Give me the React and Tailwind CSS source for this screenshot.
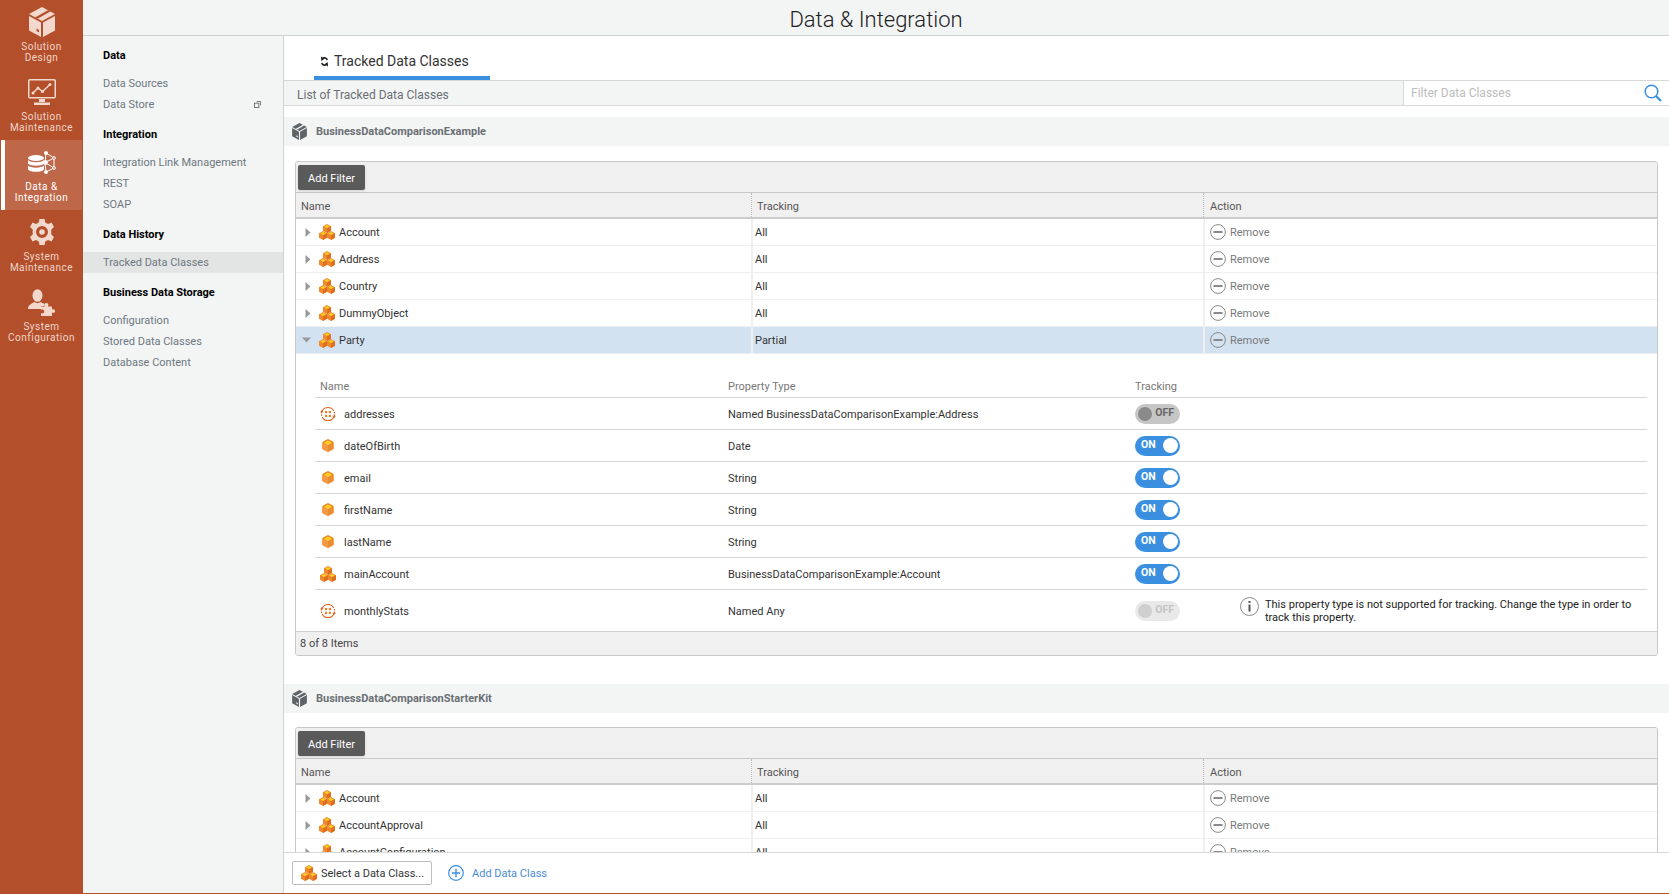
import React from "react";

const PackageIcon = ({ className, fill, gap }) => (
  <svg viewBox="0 0 26 30" className={className}>
    <path d="M13 0 L26 7 L13 14 L0 7 Z" fill={fill} />
    <path d="M6 10.5 L19 3.3 L21.4 4.6 L8.4 11.8 Z" fill={gap} />
    <path d="M0 9 L12 15.6 V30 L0 23.4 Z" fill={fill} />
    <path d="M26 9 L14 15.6 V30 L26 23.4 Z" fill={fill} />
    <path d="M7.5 21.5 l2.5 1.4 v2.6 l-2.5 -1.4 Z" fill={gap} />
  </svg>
);

const MonitorIcon = ({ className }) => (
  <svg viewBox="0 0 28 26" className={className} fill="none" stroke="#f3d9cd">
    <rect x="0.75" y="0.75" width="26.5" height="18" rx="1" strokeWidth="1.5" />
    <path d="M5 14 L10 9 L14.5 12.5 L22 5.5" strokeWidth="1.4" />
    <g fill="#f3d9cd" stroke="none">
      <circle cx="5" cy="14" r="1.5" /><circle cx="10" cy="9" r="1.5" /><circle cx="14.5" cy="12.5" r="1.5" /><circle cx="22" cy="5.5" r="1.5" />
      <rect x="11" y="20" width="6" height="3" />
      <rect x="6" y="23.5" width="16" height="2.5" />
    </g>
  </svg>
);

const DataIcon = ({ className }) => (
  <svg viewBox="0 0 28 23" className={className}>
    <g fill="#ffffff">
      <ellipse cx="8" cy="7" rx="8" ry="3" />
      <path d="M0 9 C2 12 14 12 16 9 V12.6 C14 15.6 2 15.6 0 12.6 Z" />
      <path d="M0 14.6 C2 17.4 14 17.4 16 14.6 V18.4 C14 21.6 2 21.6 0 18.4 Z" />
    </g>
    <g stroke="#ffffff" strokeWidth="1" fill="none">
      <path d="M18 2 L26 7 L26 17 L18 21 M18 2 L17 11.5 L18 21 M17 11.5 L26 7 M17 11.5 L26 17 M16 11.5 H17" />
    </g>
    <g fill="#ffffff">
      <circle cx="18" cy="2" r="2" /><circle cx="17.5" cy="11.5" r="2.4" /><circle cx="18" cy="21" r="2" />
    </g>
    <g fill="#bf6849" stroke="#ffffff" strokeWidth="1">
      <circle cx="26" cy="7" r="1.4" /><circle cx="26" cy="17" r="1.4" />
    </g>
  </svg>
);

const GearIcon = ({ className }) => (
  <svg viewBox="0 0 26 26" className={className}>
    <path fillRule="evenodd" fill="#f3d9cd" d="M10.5 0 H15.5 L16.3 3.6 L19 4.9 L22.5 3.6 L25 8 L22.3 10.5 V15.5 L25 18 L22.5 22.4 L19 21.1 L16.3 22.4 L15.5 26 H10.5 L9.7 22.4 L7 21.1 L3.5 22.4 L1 18 L3.7 15.5 V10.5 L1 8 L3.5 3.6 L7 4.9 L9.7 3.6 Z M13 7 A6 6 0 1 0 13 19 A6 6 0 1 0 13 7 Z M13 10.2 A2.8 2.8 0 1 1 13 15.8 A2.8 2.8 0 1 1 13 10.2 Z" />
  </svg>
);

const PersonIcon = ({ className }) => (
  <svg viewBox="0 0 27 27" className={className}>
    <g fill="#f3d9cd">
      <ellipse cx="9.5" cy="6.5" rx="5" ry="6.3" />
      <path d="M0 20 C0 15.5 4 14.5 6.5 13 C8 14.5 11 14.5 12.5 13 C14.5 14 15.5 14.5 16.5 15 V17 H13 V20 Z" />
      <path d="M13 17.5 H17 C16 15 17 14 18.5 14 C20 14 21 15 20 17.5 H24 V20.5 C26 19.6 27 20.5 27 22 C27 23.5 26 24.4 24 23.5 V27 H13 V24 C15 25 16.2 24 16.2 22.5 C16.2 21 15 20 13 21 Z" />
    </g>
  </svg>
);

const Cube = ({ x, y }) => (
  <g transform={`translate(${x} ${y})`}>
    <path d="M4 0 L8 2.2 V6.8 L4 9 L0 6.8 V2.2 Z" fill="#f0892b" />
    <path d="M4 4.6 L8 2.2 V6.8 L4 9 Z" fill="#dd6f1f" />
    <path d="M4 1 L6.6 2.4 L4 3.9 L1.4 2.4 Z" fill="#ffd21f" />
  </g>
);

const CubesIcon = ({ className }) => (
  <svg viewBox="0 0 16 16" className={className}>
    <Cube x={4} y={0} />
    <Cube x={0} y={7} />
    <Cube x={8} y={7} />
  </svg>
);

const SingleCube = ({ className }) => (
  <svg viewBox="0 0 12 13" className={className}>
    <path d="M6 0.3 L11.4 3 V10 L6 12.7 L0.6 10 V3 Z" fill="#ee8a2d" stroke="#ee8a2d" strokeWidth="0.6" strokeLinejoin="round" />
    <path d="M6 6 V12.7 L0.6 10 V3 Z" fill="#f29a45" />
    <path d="M6 1.5 L10 3.7 L6 5.9 L2 3.7 Z" fill="#ffd21f" />
  </svg>
);

const RingIcon = ({ className }) => (
  <svg viewBox="0 0 16 16" className={className} fill="none">
    <path d="M2.2 5 A6.5 6.5 0 0 1 13.8 5 M13.8 11 A6.5 6.5 0 0 1 2.2 11" stroke="#d9651c" strokeWidth="1.1" />
    <path d="M1.6 6 V10 M14.4 6 V10" stroke="#d9651c" strokeWidth="1.1" strokeDasharray="1.6 1" />
    <path d="M0 6.2 L2 4 L3.6 6.2 Z M12.4 9.8 L14 12 L16 9.8 Z" fill="#d9651c" />
    <g fill="#e8812a">
      <rect x="5" y="5" width="2.2" height="2.2" /><rect x="8.8" y="5" width="2.2" height="2.2" />
      <rect x="5" y="8.8" width="2.2" height="2.2" /><rect x="8.8" y="8.8" width="2.2" height="2.2" />
    </g>
  </svg>
);

const RemoveIcon = () => (
  <svg viewBox="0 0 16 16" className="w-4 h-4 shrink-0" fill="none">
    <circle cx="8" cy="8" r="7.4" stroke="#8a8a8a" strokeWidth="1" />
    <rect x="3.5" y="7" width="9" height="2" fill="#8a8a8a" />
  </svg>
);

const Arrow = ({ open }) =>
  open ? (
    <svg viewBox="0 0 9 6" className="w-[9px] h-[6px] ml-[6px] mr-[8px] shrink-0">
      <path d="M0 0.5 H9 L4.5 5.5 Z" fill="#999999" />
    </svg>
  ) : (
    <svg viewBox="0 0 6 9" className="w-[6px] h-[9px] ml-[9px] mr-[8px] shrink-0">
      <path d="M0.5 0 L5.5 4.5 L0.5 9 Z" fill="#999999" />
    </svg>
  );

const NavItem = ({ icon, lines, active }) => (
  <div className={`relative h-[70px] flex flex-col items-center ${active ? "bg-[#bf6849] mr-px ml-px text-white" : "text-[#f1d6ca]"}`}>
    {active && <div className="absolute left-0 top-0 bottom-0 w-[4px] bg-white" />}
    <div className="h-[41px] shrink-0 flex items-center justify-center pt-[3px]">{icon}</div>
    <div className="text-center text-[10px] leading-[11px] tracking-[0.5px]">
      {lines.map((l) => (
        <div key={l}>{l}</div>
      ))}
    </div>
  </div>
);

const SubHead = ({ children }) => (
  <div className="h-[29px] mt-[4px] pt-[3px] pl-[20px] flex items-center text-[11px] font-bold text-black">{children}</div>
);

const SubLink = ({ children, active, ext }) => (
  <div className={`h-[21px] pl-[20px] pr-[22px] flex items-center justify-between text-[11px] text-[#6e7780] ${active ? "bg-[#e3e5e5]" : ""}`}>
    <span className="pt-[2px]">{children}</span>
    {ext && (
      <svg viewBox="0 0 8 8" className="w-[7px] h-[7px]" fill="none" stroke="#666666">
        <rect x="0.5" y="2.5" width="5" height="5" />
        <path d="M3 0.5 H7.5 V5" />
      </svg>
    )}
  </div>
);

const SectionHead = ({ name }) => (
  <div className="h-[29px] bg-[#f3f5f5] flex items-center pl-[8px] gap-[9px]">
    <PackageIcon className="w-[15px] h-[17px]" fill="#5f6468" gap="#f3f5f5" />
    <span className="pt-[2px] text-[11px] font-bold text-[#6a6f73]">{name}</span>
  </div>
);

const Toolbar = () => (
  <div className="h-[31px] bg-[#f0f0f0] border-b border-[#c8c8c8] pt-[3px] pl-[2px]">
    <div className="w-[67px] h-[25px] pt-[3px] bg-[#5a5a5a] rounded-[2px] shadow-sm flex items-center justify-center text-[11px] text-white">Add Filter</div>
  </div>
);

const HeadRow = () => (
  <div className="h-[26px] bg-[#f0f0f0] border-b-2 border-[#cccccc] grid grid-cols-[455px_452px_1fr] items-stretch text-[11px] text-[#555555]">
    <div className="pl-[5px] flex items-center"><span className="pt-[4px]">Name</span></div>
    <div className="pl-[5px] flex items-center border-l border-dotted border-[#bbbbbb]"><span className="pt-[4px]">Tracking</span></div>
    <div className="pl-[6px] flex items-center border-l border-dotted border-[#bbbbbb]"><span className="pt-[4px]">Action</span></div>
  </div>
);

const Row = ({ name, track, open }) => (
  <div className={`h-[27px] border-b border-[#eeeeee] grid grid-cols-[455px_452px_1fr] items-stretch text-[11px] text-[#333333] ${open ? "bg-[#d3e2f1]" : ""}`}>
    <div className="flex items-center">
      <Arrow open={open} />
      <CubesIcon className="w-[16px] h-[16px] mr-[4px] shrink-0" />
      <span className="pt-[2px]">{name}</span>
    </div>
    <div className="pl-[2px] flex items-center border-l-2 border-[#f0f0f0]"><span className="pt-[2px]">{track}</span></div>
    <div className="pl-[5px] flex items-center gap-[4px] border-l-2 border-[#f0f0f0]">
      <RemoveIcon />
      <span className="pt-[2px] text-[#77797c]">Remove</span>
    </div>
  </div>
);

const Toggle = ({ state }) => {
  if (state === "on")
    return (
      <div className="w-[45px] h-[20px] rounded-full bg-[#3b8fdf] flex items-center justify-between pl-[6px] pr-[2px]">
        <span className="text-[10.5px] font-bold text-white leading-none">ON</span>
        <span className="w-[15px] h-[15px] rounded-full bg-white" />
      </div>
    );
  if (state === "off")
    return (
      <div className="w-[45px] h-[20px] rounded-full bg-[#c6c6c6] flex items-center pl-[3px] pr-[6px] justify-between">
        <span className="w-[14px] h-[14px] rounded-full bg-[#8a8a8a]" />
        <span className="text-[10.5px] font-bold text-[#666666] leading-none">OFF</span>
      </div>
    );
  return (
    <div className="w-[45px] h-[20px] rounded-full bg-[#e9e9e9] flex items-center pl-[3px] pr-[6px] justify-between">
      <span className="w-[14px] h-[14px] rounded-full bg-[#cfcfcf]" />
      <span className="text-[10.5px] font-bold text-[#c4c4c4] leading-none">OFF</span>
    </div>
  );
};

const subCols = "grid grid-cols-[413px_407px_105px_1fr]";

const PropRow = ({ icon, name, type, toggle }) => (
  <div className={`${subCols} h-[32px] items-center border-b border-[#d6d6d6] text-[11px] text-[#333333]`}>
    <div className="flex items-center">
      <span className="w-[29px] pl-[5px] flex items-center">{icon}</span>
      <span className="pt-[4px]">{name}</span>
    </div>
    <div className="pt-[4px]">{type}</div>
    <div><Toggle state={toggle} /></div>
    <div />
  </div>
);

const ring = <RingIcon className="w-[16px] h-[16px]" />;
const single = <SingleCube className="w-[12px] h-[13px] ml-[2px]" />;
const cubes = <CubesIcon className="w-[16px] h-[16px]" />;

const Card1 = () => (
  <div className="mt-[15px] mx-[11px] border border-[#c8c8c8] rounded-[3px] overflow-hidden">
    <Toolbar />
    <HeadRow />
    {["Account", "Address", "Country", "DummyObject"].map((n) => (
      <Row key={n} name={n} track="All" />
    ))}
    <Row name="Party" track="Partial" open />
    <div className="pl-[19px] pr-[10px]">
      <div className={`${subCols} h-[44px] items-end pb-[2px] border-b border-[#d6d6d6] text-[11px] text-[#777777]`}>
        <div className="pl-[5px]">Name</div>
        <div>Property Type</div>
        <div>Tracking</div>
        <div />
      </div>
      <PropRow icon={ring} name="addresses" type="Named BusinessDataComparisonExample:Address" toggle="off" />
      <PropRow icon={single} name="dateOfBirth" type="Date" toggle="on" />
      <PropRow icon={single} name="email" type="String" toggle="on" />
      <PropRow icon={single} name="firstName" type="String" toggle="on" />
      <PropRow icon={single} name="lastName" type="String" toggle="on" />
      <PropRow icon={cubes} name="mainAccount" type="BusinessDataComparisonExample:Account" toggle="on" />
      <div className={`${subCols} h-[41px] items-center text-[11px] text-[#333333]`}>
        <div className="flex items-center">
          <span className="w-[29px] pl-[5px] flex items-center">{ring}</span>
          <span className="pt-[4px]">monthlyStats</span>
        </div>
        <div className="pt-[4px]">Named Any</div>
        <div><Toggle state="disabled" /></div>
        <div className="flex items-start">
          <svg viewBox="0 0 19 19" className="w-[19px] h-[19px] shrink-0 mr-[6px]" fill="none">
            <circle cx="9.5" cy="9.5" r="9" stroke="#8a8a8a" />
            <rect x="8.5" y="4" width="2" height="2" fill="#555555" />
            <rect x="8.5" y="7.5" width="2" height="7" fill="#555555" />
          </svg>
          <span className="pt-[1px] text-[11px] leading-[13px] text-[#222222]">This property type is not supported for tracking. Change the type in order to track this property.</span>
        </div>
      </div>
    </div>
    <div className="h-[24px] bg-[#f0f0f0] border-t border-[#d0d0d0] pl-[4px] flex items-center text-[11px] text-[#444444]"><span className="pt-[2px]">8 of 8 Items</span></div>
  </div>
);

const Card2 = () => (
  <div className="mt-[14px] mx-[11px] border border-[#c8c8c8] rounded-[3px] overflow-hidden">
    <Toolbar />
    <HeadRow />
    <Row name="Account" track="All" />
    <Row name="AccountApproval" track="All" />
    <Row name="AccountConfiguration" track="All" />
  </div>
);

export default function App() {
  return (
    <div className="w-full h-screen flex overflow-hidden bg-white font-['Roboto',sans-serif]">
      <aside className="w-[83px] shrink-0 bg-[#b34f2a]">
        <NavItem icon={<PackageIcon className="w-[26px] h-[30px]" fill="#f3d9cd" gap="#b34f2a" />} lines={["Solution", "Design"]} />
        <NavItem icon={<MonitorIcon className="w-[28px] h-[26px]" />} lines={["Solution", "Maintenance"]} />
        <NavItem active icon={<DataIcon className="w-[28px] h-[23px]" />} lines={["Data &", "Integration"]} />
        <NavItem icon={<GearIcon className="w-[26px] h-[26px]" />} lines={["System", "Maintenance"]} />
        <NavItem icon={<PersonIcon className="w-[27px] h-[27px]" />} lines={["System", "Configuration"]} />
      </aside>
      <div className="flex-1 min-w-0 flex flex-col border-b border-[#b34f2a]">
        <header className="h-[36px] shrink-0 bg-[#f3f5f5] border-b border-[#cfd2d2] flex items-center justify-center pt-[5px] text-[22px] leading-none font-light text-[#222222]">
          Data &amp; Integration
        </header>
        <div className="flex-1 min-h-0 flex">
          <nav className="w-[201px] shrink-0 bg-[#f3f5f5] border-r border-[#cfd2d2]">
            <SubHead>Data</SubHead>
            <div className="mt-[4px]"><SubLink>Data Sources</SubLink><SubLink ext>Data Store</SubLink></div>
            <SubHead>Integration</SubHead>
            <div className="mt-[4px]"><SubLink>Integration Link Management</SubLink><SubLink>REST</SubLink><SubLink>SOAP</SubLink></div>
            <SubHead>Data History</SubHead>
            <div className="mt-[4px]"><SubLink active>Tracked Data Classes</SubLink></div>
            <SubHead>Business Data Storage</SubHead>
            <div className="mt-[4px]"><SubLink>Configuration</SubLink><SubLink>Stored Data Classes</SubLink><SubLink>Database Content</SubLink></div>
          </nav>
          <main className="flex-1 min-w-0 flex flex-col">
            <div className="h-[44px] shrink-0 pl-[30px]">
              <div className="w-[176px] h-[44px] border-b-4 border-[#3b8fdf] flex items-center pl-[6px] pt-[10px] gap-[4px] text-[14px] text-[#333333]">
                <svg viewBox="0 0 10 12" className="w-[9px] h-[11px]" fill="none" stroke="#222222" strokeWidth="1.8">
                  <path d="M8 4.5 A3 3 0 0 0 3 2.8" />
                  <path d="M2 7.5 A3 3 0 0 0 7 9.2" />
                  <path d="M1 0.5 L5 3 L1.5 5.5 Z M9 11.5 L5 9 L8.5 6.5 Z" fill="#222222" stroke="none" />
                </svg>
                <span className="ml-[1px]">Tracked Data Classes</span>
              </div>
            </div>
            <div className="h-[26px] shrink-0 bg-[#f3f5f5] border-y border-[#d6d8d8] flex items-stretch justify-between">
              <div className="pl-[13px] pt-[4px] flex items-center text-[12px] text-[#6a6f73]">List of Tracked Data Classes</div>
              <div className="w-[266px] bg-white border-l border-[#d6d8d8] flex items-center justify-between pl-[7px] pr-[7px]">
                <span className="text-[12px] text-[#bcbcbc]">Filter Data Classes</span>
                <svg viewBox="0 0 18 18" className="w-[18px] h-[18px]" fill="none" stroke="#3b8fdf">
                  <circle cx="7.5" cy="7.5" r="6.3" strokeWidth="1.5" />
                  <path d="M12 12 L17 17" strokeWidth="2.2" />
                </svg>
              </div>
            </div>
            <div className="flex-1 min-h-0 overflow-hidden pt-[11px]">
              <SectionHead name="BusinessDataComparisonExample" />
              <Card1 />
              <div className="h-[28px]" />
              <SectionHead name="BusinessDataComparisonStarterKit" />
              <Card2 />
            </div>
            <div className="h-[41px] shrink-0 border-t border-[#d6d8d8] bg-white flex items-center pl-[8px]">
              <div className="w-[140px] h-[24px] border border-[#bdbdbd] rounded-[2px] flex items-center pl-[8px] gap-[4px] text-[11px] text-[#333333]">
                <CubesIcon className="w-[16px] h-[16px] shrink-0" />
                <span className="pt-[2px]">Select a Data Class...</span>
              </div>
              <svg viewBox="0 0 16 16" className="w-[16px] h-[16px] ml-[16px]" fill="none" stroke="#3b8fdf">
                <circle cx="8" cy="8" r="7.3" strokeWidth="1.2" />
                <path d="M8 3.8 V12.2 M3.8 8 H12.2" strokeWidth="1.4" />
              </svg>
              <span className="ml-[8px] pt-[2px] text-[11px] text-[#4a8ad8]">Add Data Class</span>
            </div>
          </main>
        </div>
      </div>
    </div>
  );
}
